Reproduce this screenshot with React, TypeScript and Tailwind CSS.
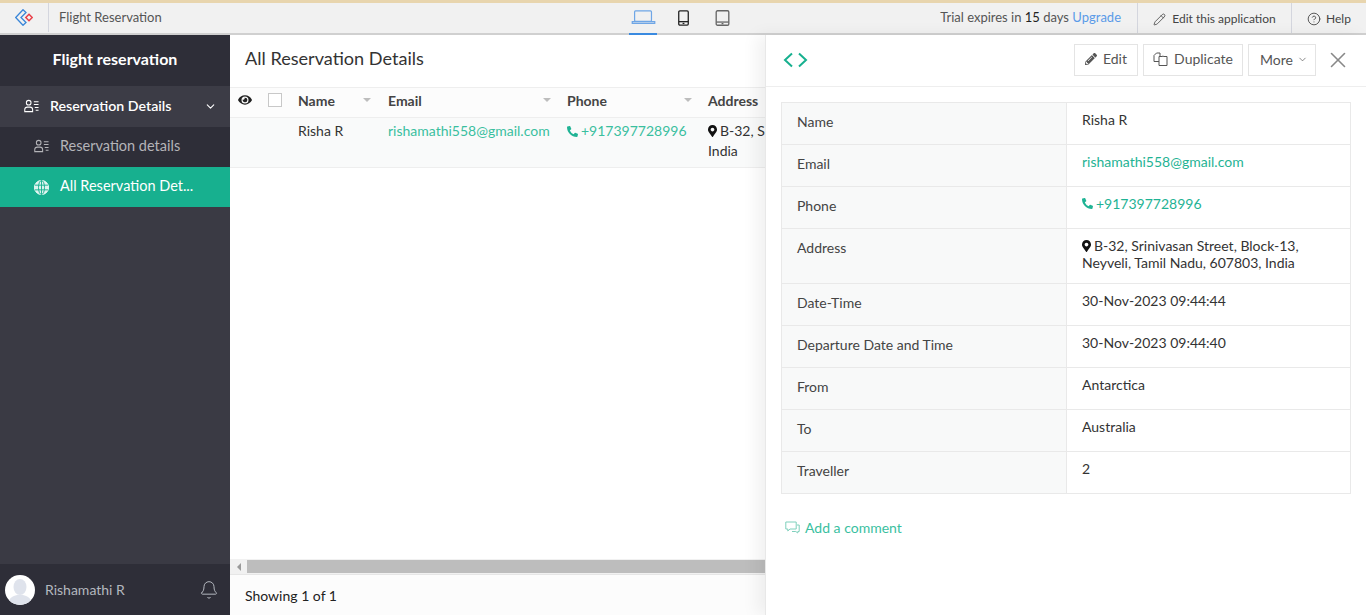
import { ChevronDown, X, Pencil, CircleHelp, Bell } from "lucide-react";
import { FaPhoneAlt, FaMapMarkerAlt, FaEye, FaPencilAlt } from "react-icons/fa";

function UserListIcon({ className }: { className: string }) {
  return (
    <svg viewBox="0 0 16 14" className={className} fill="none" stroke="currentColor" strokeWidth="1.1">
      <circle cx="5" cy="3.5" r="2.5" />
      <path d="M0.8 13v-2.2c0-1.6 1.2-2.6 2.8-2.6h2.8c1.6 0 2.8 1 2.8 2.6V13z" />
      <path d="M10.5 2.5h5M10.5 5.5h5M11.5 8.5h4M12.5 11.5h3" />
    </svg>
  );
}

function GlobeIcon() {
  return (
    <svg viewBox="0 0 16 16" className="w-[15px] h-[15px]" fill="none" stroke="white" strokeWidth="1">
      <circle cx="8" cy="8" r="7.5" fill="white" fillOpacity="0.85" />
      <ellipse cx="8" cy="8" rx="3.2" ry="7.5" stroke="#17b08f" />
      <path d="M1 5.5h14M1 10.5h14M8 .5v15" stroke="#17b08f" />
    </svg>
  );
}

function Logo() {
  return (
    <svg viewBox="0 0 18 17" className="w-[18px] h-[17px]" fill="none">
      <path d="M8 .7.7 8.5 8 16.3l3-2.8-5-5 5-5z" stroke="#3a86d8" strokeWidth="1.3" />
      <path d="M14 5.3 17.2 8.5 14 11.7 10.8 8.5z" stroke="#e8404a" strokeWidth="1.5" />
    </svg>
  );
}

function Laptop() {
  return (
    <svg viewBox="0 0 26 16" className="w-[25px] h-[15px]" fill="none" stroke="#6fa6e6" strokeWidth="1.3">
      <rect x="3.5" y="1" width="18" height="11" rx="1" />
      <path d="M1 12.5h24v1.8H1z" />
    </svg>
  );
}

function Phone() {
  return (
    <svg viewBox="0 0 12 17" className="w-[11px] h-[16px]" fill="none" stroke="#222" strokeWidth="1.4">
      <rect x=".8" y=".8" width="10.4" height="15.4" rx="1.2" />
      <path d="M1 12.5h10" />
      <path d="M5 14.4h2" />
    </svg>
  );
}

function Tablet() {
  return (
    <svg viewBox="0 0 15 17" className="w-[15px] h-[16px]" fill="none" stroke="#666" strokeWidth="1.4">
      <rect x=".8" y=".8" width="13.4" height="15.4" rx="1.4" />
      <path d="M1 12.8h13" />
      <path d="M6.5 14.5h2" />
    </svg>
  );
}

function DuplicateIcon() {
  return (
    <svg viewBox="0 0 15 14" className="w-[15px] h-[14px]" fill="none" stroke="#555" strokeWidth="1">
      <path d="M1 3.5 3.5 1H7v8.5H1z" />
      <path d="M6 4.5h3.5V4L11 4.5h3v9H6z" fill="white" />
    </svg>
  );
}

function CommentIcon() {
  return (
    <svg viewBox="0 0 15 14" className="w-[15px] h-[14px]" fill="none" stroke="#7fd0bc" strokeWidth="1">
      <path d="M.8 1h10.4v7H5l-2.2 2V8H.8z" />
      <path d="M12 4h2.2v6.5h-1.4V12l-2-1.5H7" />
    </svg>
  );
}

function SortCaret() {
  return <span className="w-0 h-0 border-x-[4px] border-x-transparent border-t-[4px] border-t-[#bdbdbd]" />;
}

function Avatar() {
  return (
    <svg viewBox="0 0 30 30" className="w-[30px] h-[30px] rounded-full bg-white shrink-0">
      <ellipse cx="15" cy="12" rx="6.5" ry="8" fill="#dfe3ec" />
      <path d="M3 30c0-7 5-9 9-10h6c4 1 9 3 9 10z" fill="#dfe3ec" />
    </svg>
  );
}

const detailRows: { label: string; h: string; value: React.ReactNode }[] = [
  { label: "Name", h: "h-[42px]", value: "Risha R" },
  { label: "Email", h: "h-[42px]", value: <span className="text-[#1fb394]">rishamathi558@gmail.com</span> },
  {
    label: "Phone",
    h: "h-[42px]",
    value: (
      <span className="flex items-center gap-[3px] text-[#1fb394]">
        <FaPhoneAlt className="w-[11px] h-[11px]" />
        +917397728996
      </span>
    ),
  },
  {
    label: "Address",
    h: "h-[55px]",
    value: (
      <>
        <FaMapMarkerAlt className="inline w-[9px] h-[12px] mr-[3px] -mt-[2px] text-[#111]" />
        B-32, Srinivasan Street, Block-13,
        <br />
        Neyveli, Tamil Nadu, 607803, India
      </>
    ),
  },
  { label: "Date-Time", h: "h-[42px]", value: "30-Nov-2023 09:44:44" },
  { label: "Departure Date and Time", h: "h-[42px]", value: "30-Nov-2023 09:44:40" },
  { label: "From", h: "h-[42px]", value: "Antarctica" },
  { label: "To", h: "h-[42px]", value: "Australia" },
  { label: "Traveller", h: "h-[42px]", value: "2" },
];

export default function App() {
  return (
    <div className="w-[1366px] h-[615px] flex flex-col overflow-hidden bg-white text-[14px] text-[#333] font-['Lato',sans-serif]">
      <div className="h-[3px] bg-[#e8d5ae] shrink-0" />

      {/* Top bar */}
      <header className="h-[32px] shrink-0 flex items-stretch bg-[#f1f1f1] border-b-2 border-[#d0d0d0] text-[13px]">
        <div className="w-[49px] flex items-center justify-center border-r border-[#d4d6de] mb-px">
          <Logo />
        </div>
        <div className="w-[558px] pl-[10px] pt-[5px] text-[#555]">Flight Reservation</div>
        <div className="flex items-stretch">
          <div className="w-[28px] ml-[22px] flex items-center justify-center border-b-2 border-[#3a8ae0] -mb-[2px] pb-px">
            <Laptop />
          </div>
          <div className="w-[11px] ml-[21px] flex items-center"><Phone /></div>
          <div className="w-[15px] ml-[26px] flex items-center"><Tablet /></div>
        </div>
        <div className="ml-auto flex items-stretch">
          <div className="pr-[16px] pt-[5px] text-[#555]">
            Trial expires in <span className="text-[#222]">15</span> days <span className="text-[#5b9be8]">Upgrade</span>
          </div>
          <div className="w-[154px] flex items-center justify-center gap-[6px] border-l border-[#d4d6de] text-[#444] text-[12px] pt-[2px]">
            <Pencil className="w-[13px] h-[13px]" strokeWidth={1.5} />
            Edit this application
          </div>
          <div className="w-[75px] flex items-center justify-center gap-[5px] border-l border-[#d4d6de] text-[#444] text-[12px] pt-[2px]">
            <CircleHelp className="w-[14px] h-[14px]" strokeWidth={1.5} />
            Help
          </div>
        </div>
      </header>

      <div className="flex-1 flex min-h-0">
        {/* Sidebar */}
        <aside className="w-[230px] shrink-0 flex flex-col bg-[#3a3a44]">
          <div className="h-[51px] bg-[#2e2e38] flex items-center justify-center pb-[4px] text-white font-bold text-[16px]">
            Flight reservation
          </div>
          <div className="h-[41px] bg-[#3c3c46] flex items-center pl-[24px] pr-[13px] pb-[2px] text-white text-[14.2px] font-semibold">
            <UserListIcon className="w-[15px] h-[14px] mr-[11px]" />
            Reservation Details
            <ChevronDown className="w-[13px] h-[13px] ml-auto mt-[2px]" strokeWidth={2} />
          </div>
          <div className="h-[40px] bg-[#2e2e38] flex items-center pl-[34px] pb-[3px] text-[#b4b4b8] text-[14.5px]">
            <UserListIcon className="w-[15px] h-[14px] mr-[11px] mt-[1px]" />
            Reservation details
          </div>
          <div className="h-[40px] bg-[#17b08f] flex items-center pl-[34px] pb-[3px] text-white text-[14.5px]">
            <span className="mr-[11px] mt-[3px]"><GlobeIcon /></span>
            All Reservation Det...
          </div>
          <div className="mt-auto h-[51px] bg-[#2e2e38] flex items-center pl-[5px] pr-[11px] text-[#b4b8bf]">
            <Avatar />
            <span className="ml-[10px]">Rishamathi R</span>
            <Bell className="w-[20px] h-[20px] ml-auto" strokeWidth={1.2} />
          </div>
        </aside>

        {/* List */}
        <main className="w-[535px] shrink-0 flex flex-col overflow-hidden">
          <div className="h-[52px] shrink-0 flex items-center pl-[15px] pb-[5px] text-[18.1px] text-[#333]">All Reservation Details</div>
          <div className="h-[31px] shrink-0 flex items-center pb-[5px] bg-[#fcfcfc] border-y border-[#eeeeee] font-bold text-[#444] whitespace-nowrap">
            <div className="w-[30px] shrink-0 flex justify-center"><FaEye className="w-[14px] h-[14px] text-[#222]" /></div>
            <div className="w-[38px] shrink-0 flex pl-[8px]"><span className="w-[14px] h-[14px] bg-white border border-[#c8c8c8]" /></div>
            <div className="w-[90px] shrink-0 flex items-center pr-[17px] justify-between">Name<SortCaret /></div>
            <div className="w-[179px] shrink-0 flex items-center pr-[16px] justify-between">Email<SortCaret /></div>
            <div className="w-[141px] shrink-0 flex items-center pr-[16px] justify-between">Phone<SortCaret /></div>
            <div className="shrink-0">Address</div>
          </div>
          <div className="h-[50px] shrink-0 flex items-start pt-[3px] bg-[#f9fafa] border-b border-[#eeeeee] leading-[20px] whitespace-nowrap">
            <div className="w-[68px] shrink-0" />
            <div className="w-[90px] shrink-0">Risha R</div>
            <div className="w-[179px] shrink-0 text-[#3abf9f]">rishamathi558@gmail.com</div>
            <div className="w-[141px] shrink-0 flex items-center gap-[3px] text-[#3abf9f]">
              <FaPhoneAlt className="w-[11px] h-[11px] text-[#1fb394]" />
              +917397728996
            </div>
            <div className="w-[57px] shrink-0 overflow-hidden">
              <FaMapMarkerAlt className="inline w-[9px] h-[12px] mr-[3px] -mt-[2px] text-[#111]" />
              B-32, Srinivasan Street
              <br />
              India
            </div>
          </div>
          <div className="flex-1" />
          <div className="h-[16px] shrink-0 flex items-center bg-[#f1f1f1] border-b border-[#e6e6e6]">
            <div className="w-[17px] flex justify-center">
              <span className="w-0 h-0 border-y-[4px] border-y-transparent border-r-[4px] border-r-[#9a9a9a]" />
            </div>
            <div className="flex-1 h-[13px] bg-[#bdbdbd]" />
          </div>
          <div className="h-[40px] shrink-0 flex items-center pl-[15px] text-[#222] bg-[#fcfcfc]">Showing 1 of 1</div>
        </main>

        {/* Detail panel */}
        <section className="flex-1 flex flex-col bg-white border-l border-[#e8e8e8] shadow-[-8px_0_16px_rgba(0,0,0,0.06)] z-10">
          <div className="h-[52px] shrink-0 flex items-center border-b border-[#eeeeee] pl-[17px] pr-[15px] pb-[2px]">
            <svg viewBox="0 0 25 16" className="w-[25px] h-[16px]" fill="none" stroke="#17b08f" strokeWidth="2">
              <path d="M9 1.5 2 8l7 6.5M16 1.5 23 8l-7 6.5" />
            </svg>
            <div className="ml-auto flex items-center gap-[5px] text-[#555]">
              <div className="h-[32px] w-[64px] flex items-center justify-center gap-[6px] pb-[2px] border border-[#e4e4e4]">
                <FaPencilAlt className="w-[12px] h-[12px] text-[#555]" />
                Edit
              </div>
              <div className="h-[32px] w-[100px] flex items-center justify-center gap-[6px] pb-[2px] border border-[#e4e4e4]">
                <DuplicateIcon />
                Duplicate
              </div>
              <div className="h-[32px] w-[68px] flex items-center pl-[11px] gap-[4px] border border-[#e4e4e4]">
                More
                <ChevronDown className="w-[11px] h-[11px]" strokeWidth={1.5} />
              </div>
              <X className="w-[26px] h-[26px] ml-[4px] text-[#888]" strokeWidth={1.5} />
            </div>
          </div>

          <div className="mx-[15px] mt-[15px] border border-[#e9e9e9] border-b-0">
            {detailRows.map((r) => (
              <div key={r.label} className={`${r.h} flex border-b border-[#e9e9e9]`}>
                <div className="w-[285px] shrink-0 pl-[15px] pt-[8px] bg-[#f8f9f9] border-r border-[#e9e9e9] text-[#444]">
                  {r.label}
                </div>
                <div className="pl-[15px] pt-[8px] leading-[17px] text-[#333]">{r.value}</div>
              </div>
            ))}
          </div>

          <div className="ml-[19px] mt-[23px] flex items-center gap-[5px] text-[#3abf9f]">
            <CommentIcon />
            Add a comment
          </div>
        </section>
      </div>
    </div>
  );
}
